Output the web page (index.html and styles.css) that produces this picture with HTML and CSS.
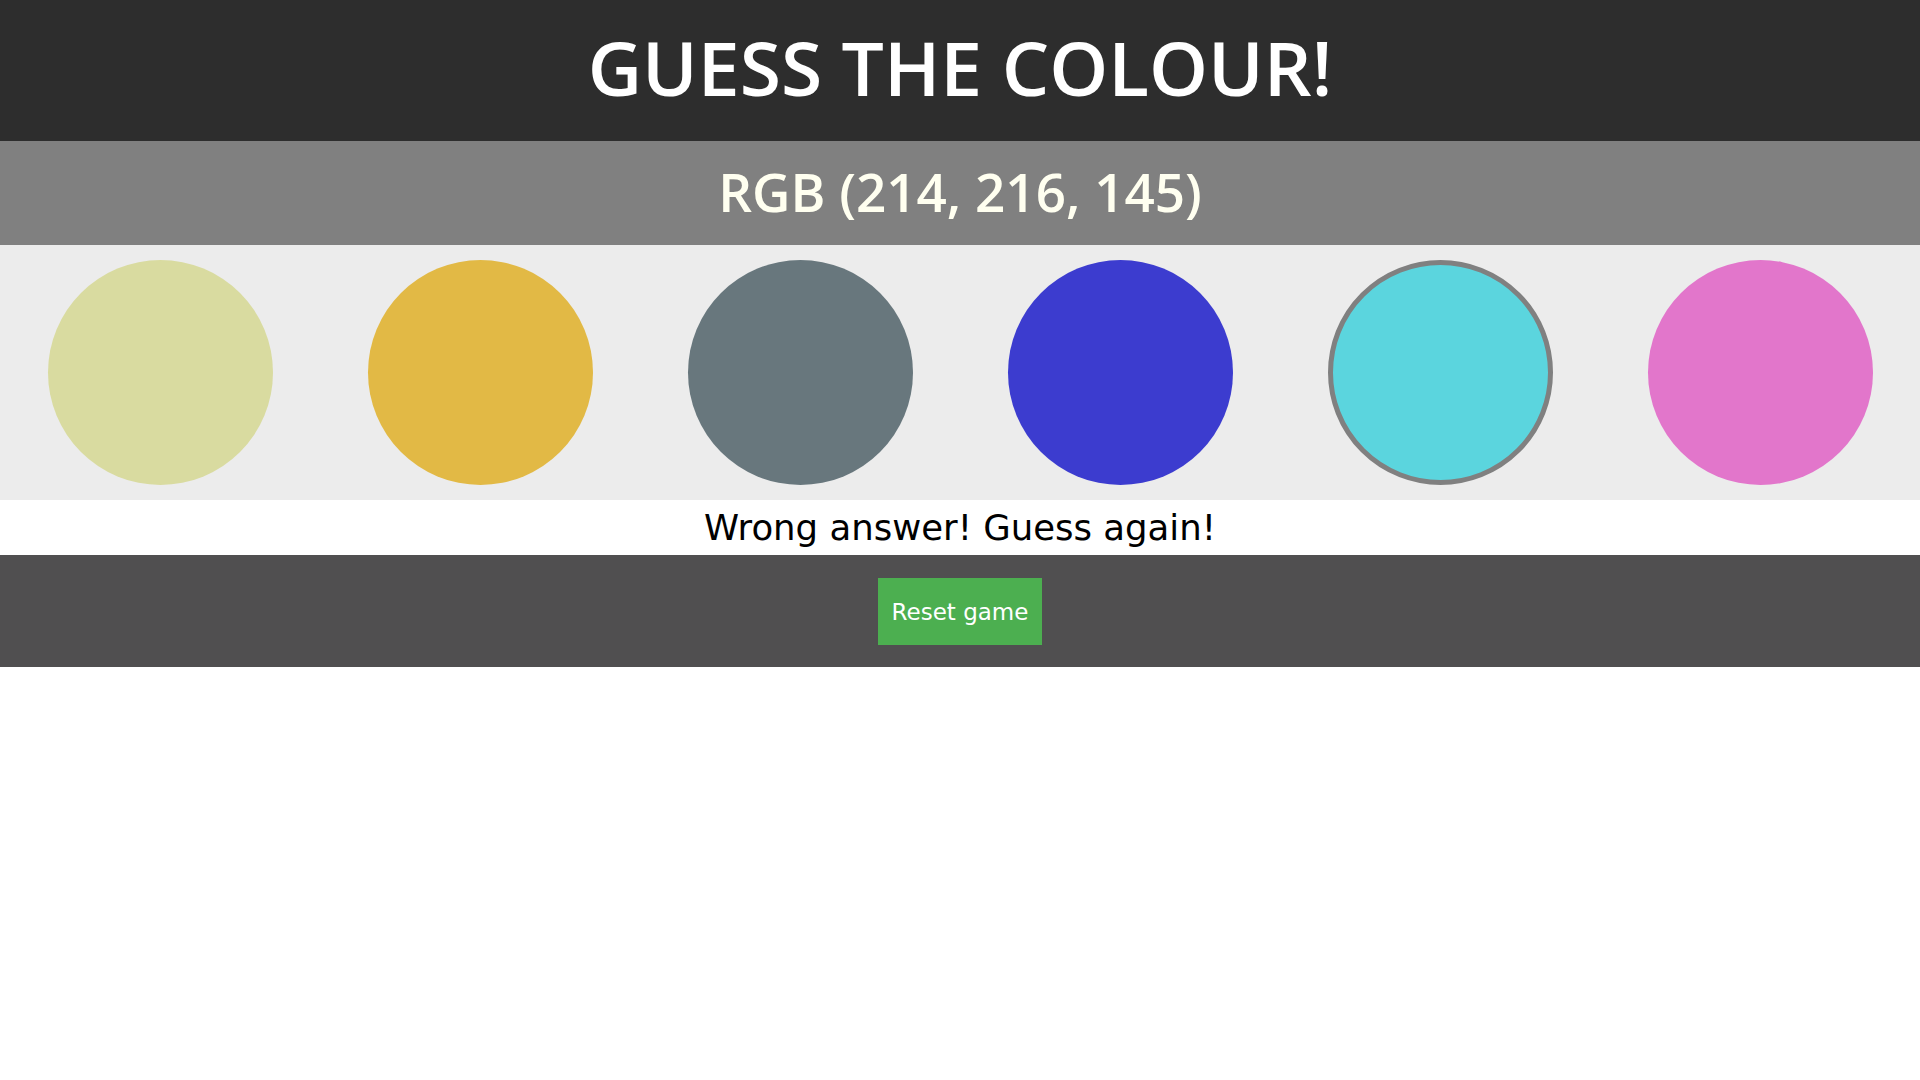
FILE: index.html
```html
<!DOCTYPE html>
<html lang="en">
<head>
<meta charset="utf-8">
<title>Guess the colour</title>
<link rel="stylesheet" href="styles.css">
</head>
<body>
<header class="header">
  <h1 class="title">GUESS THE COLOUR!</h1>
</header>
<div class="target">
  <h2 class="rgb">RGB (214, 216, 145)</h2>
</div>
<section class="board">
  <div class="cell"><div class="swatch c1"></div></div>
  <div class="cell"><div class="swatch c2"></div></div>
  <div class="cell"><div class="swatch c3"></div></div>
  <div class="cell"><div class="swatch c4"></div></div>
  <div class="cell"><div class="swatch c5 picked"></div></div>
  <div class="cell"><div class="swatch c6"></div></div>
</section>
<p class="message">Wrong answer! Guess again!</p>
<footer class="controls">
  <button class="reset">Reset game</button>
</footer>
</body>
</html>
```
FILE: styles.css
```css
html, body {
  margin: 0;
  padding: 0;
  background: #ffffff;
}
body {
  font-family: "Open Sans", "DejaVu Sans", sans-serif;
}
.header {
  background: #2d2d2d;
  height: 141px;
  display: flex;
  align-items: center;
  justify-content: center;
}
.title {
  margin: 0;
  color: #ffffff;
  font-size: 75px;
  font-weight: 600;
  line-height: 1;
  padding-bottom: 6px;
}
.target {
  background: #808080;
  height: 104px;
  display: flex;
  align-items: center;
  justify-content: center;
}
.rgb {
  margin: 0;
  color: #fffff0;
  font-size: 53px;
  font-weight: 600;
  line-height: 1;
  padding-bottom: 4px;
}
.board {
  background: #ececec;
  display: grid;
  grid-template-columns: repeat(6, 1fr);
  padding: 15px 0;
}
.cell {
  display: flex;
  justify-content: center;
}
.swatch {
  width: 225px;
  height: 225px;
  border-radius: 50%;
  box-sizing: border-box;
}
.c1 { background: #d9dba0; }
.c2 { background: #e2b945; }
.c3 { background: #68777d; }
.c4 { background: #3c3ccf; }
.c5 { background: #5bd5de; }
.c6 { background: #e276cb; }
.picked { border: 5px solid #808080; }
.message {
  margin: 0;
  height: 55px;
  display: flex;
  align-items: center;
  justify-content: center;
  font-family: "DejaVu Sans", sans-serif;
  font-size: 35.5px;
  color: #000000;
}
.controls {
  background: #504f50;
  height: 112px;
  display: flex;
  justify-content: center;
  align-items: flex-start;
  padding-top: 23px;
  box-sizing: border-box;
}
.reset {
  width: 164px;
  height: 67px;
  border: none;
  background: #4caf50;
  color: #ffffff;
  font-family: "DejaVu Sans", sans-serif;
  font-size: 23px;
  padding: 0;
  cursor: pointer;
}
```
